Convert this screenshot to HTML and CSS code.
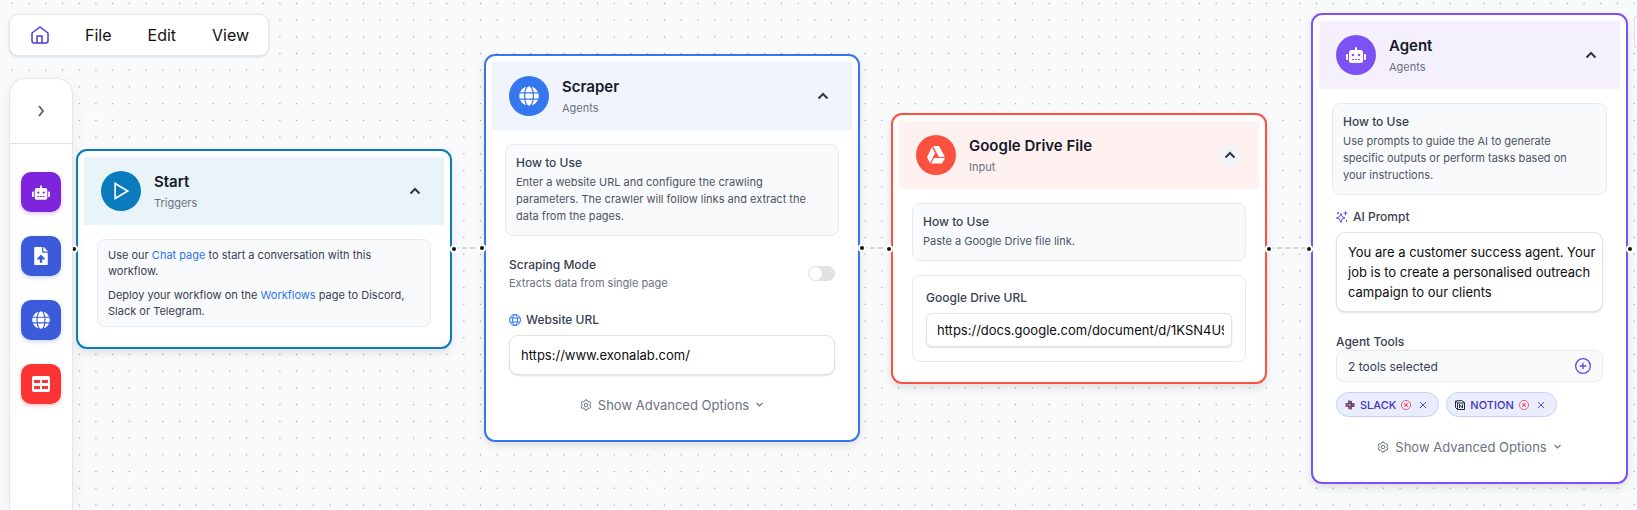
FILE: index.html
```html
<!DOCTYPE html>
<html lang="en">
<head>
  <meta charset="UTF-8" />
  <meta name="viewport" content="width=device-width, initial-scale=1.0"/>
  <title>Workflow Editor</title>
  <link rel="stylesheet" href="styles.css">
</head>
<body>
  <!-- Shared icons -->
  <svg class="icon-defs" aria-hidden="true">
    <symbol id="icon-robot" viewBox="0 0 640 512">
      <path fill="currentColor" fill-rule="evenodd" d="M32 224h32v192H32a32 32 0 0 1-32-32V256a32 32 0 0 1 32-32zm512-48v272a64 64 0 0 1-64 64H160a64 64 0 0 1-64-64V176a80 80 0 0 1 80-80h112V32a32 32 0 0 1 64 0v64h112a80 80 0 0 1 80 80zM264 256a40 40 0 1 0-80 0 40 40 0 0 0 80 0zm-8 128h-64v32h64zm96 0h-64v32h64zm104-128a40 40 0 1 0-80 0 40 40 0 0 0 80 0zm-8 128h-64v32h64zm192-128v128a32 32 0 0 1-32 32h-32V224h32a32 32 0 0 1 32 32z"/>
    </symbol>
    <symbol id="icon-globe" viewBox="0 0 496 512">
      <path fill="currentColor" d="M336.500 160C322 70.700 287.800 8 248 8s-74 62.700-88.500 152h177zM152 256c0 22.200 1.200 43.500 3.300 64h185.300c2.100-20.500 3.300-41.800 3.300-64s-1.200-43.500-3.300-64H155.300c-2.100 20.500-3.300 41.800-3.300 64zm324.700-96c-28.600-67.900-86.500-120.400-158-141.600 24.400 33.800 41.200 84.700 50 141.600h108zM177.200 18.400C105.800 39.600 47.800 92.100 19.300 160h108c8.700-56.900 25.500-107.800 49.900-141.600zM487.400 192H372.700c2.100 21 3.300 42.500 3.300 64s-1.200 43-3.300 64h114.600c5.500-20.500 8.600-41.800 8.600-64s-3.100-43.500-8.500-64zM120 256c0-21.500 1.200-43 3.300-64H8.600C3.200 212.500 0 233.800 0 256s3.200 43.500 8.600 64h114.600c-2-21-3.200-42.500-3.200-64zm39.500 96c14.500 89.300 48.700 152 88.500 152s74-62.700 88.500-152h-177zm159.300 141.600c71.400-21.200 129.400-73.700 158-141.600h-108c-8.800 56.900-25.600 107.800-50 141.600zM19.300 352c28.600 67.900 86.500 120.400 158 141.600-24.400-33.800-41.200-84.700-50-141.600h-108z"/>
    </symbol>
    <symbol id="icon-chevron-up" viewBox="0 0 24 24">
      <path d="m3 17 9-9 9 9" fill="none" stroke="currentColor" stroke-width="4"/>
    </symbol>
    <symbol id="icon-chevron-down" viewBox="0 0 24 24">
      <path d="m4 8 8 8 8-8" fill="none" stroke="currentColor" stroke-width="3"/>
    </symbol>
    <symbol id="icon-gear" viewBox="0 0 24 24">
      <g fill="none" stroke="currentColor" stroke-width="2" stroke-linejoin="round">
        <path d="M9.600 3.900 10 2h4l.4 1.900c.1.500.5.900 1 1.200l.9.500c.5.300 1.100.4 1.600.2l1.900-.6 2 3.500-1.400 1.300c-.4.300-.6.900-.6 1.500v1c0 .6.200 1.100.6 1.500l1.400 1.300-2 3.500-1.900-.6c-.5-.2-1.100-.1-1.600.2l-.9.500c-.5.300-.9.700-1 1.200L14 22h-4l-.4-1.900c-.1-.5-.5-.9-1-1.200l-.9-.5c-.5-.3-1.100-.4-1.600-.2l-1.900.6-2-3.500 1.400-1.300c.4-.4.600-.9.600-1.500v-1c0-.6-.2-1.200-.6-1.500L2.200 8.700l2-3.500 1.900.6c.5.200 1.100.1 1.600-.2l.9-.5c.5-.3.900-.7 1-1.200z"/>
        <circle cx="12" cy="12" r="3.500"/>
      </g>
    </symbol>
    <symbol id="icon-error" viewBox="0 0 24 24">
      <g fill="none" stroke="currentColor" stroke-width="2">
        <circle cx="12" cy="12" r="11"/>
        <path d="m8 8 8 8m0-8-8 8" stroke-width="2.500"/>
      </g>
    </symbol>
    <symbol id="icon-close" viewBox="0 0 24 24">
      <path d="m3 3 18 18m0-18L3 21" fill="none" stroke="currentColor" stroke-width="3"/>
    </symbol>
  </svg>

  <main class="canvas">
    <!-- Dot grid and connections -->
    <svg class="canvas-lines" aria-hidden="true">
      <defs>
        <pattern id="dots" width="20" height="20" patternUnits="userSpaceOnUse" patternTransform="translate(4 -5) scale(.836)">
          <circle cx="10" cy="10" r=".8" fill="#9a9ca3"/>
        </pattern>
      </defs>
      <rect width="100%" height="100%" fill="url(#dots)"/>
      <g class="edges">
        <path d="M454 248H482"/>
        <path d="M862 248H889"/>
        <path d="M1269 248H1309"/>
      </g>
    </svg>

    <section class="node node-start">
      <span class="handle handle-in"></span>
      <span class="handle handle-out"></span>
      <header class="node-header">
        <span class="node-icon">
          <svg width="20" height="20" viewBox="0 0 24 24" fill="none" stroke="currentColor" stroke-width="2"><path d="M5 3 20 12 5 21z"/></svg>
        </span>
        <div class="node-title">
          <h2>Start</h2>
          <p>Triggers</p>
        </div>
        <button class="collapse" aria-label="Collapse Start"><svg width="12" height="12"><use href="#icon-chevron-up"/></svg></button>
      </header>
      <div class="node-body">
        <div class="help help-plain">
          <p>Use our <a href="#chat">Chat page</a> to start a conversation with this workflow.</p>
          <p>Deploy your workflow on the <a href="#workflows">Workflows</a> page to Discord, Slack or Telegram.</p>
        </div>
      </div>
    </section>

    <section class="node node-scraper">
      <span class="handle handle-in"></span>
      <span class="handle handle-out"></span>
      <header class="node-header">
        <span class="node-icon"><svg width="20" height="20"><use href="#icon-globe"/></svg></span>
        <div class="node-title">
          <h2>Scraper</h2>
          <p>Agents</p>
        </div>
        <button class="collapse" aria-label="Collapse Scraper"><svg width="12" height="12"><use href="#icon-chevron-up"/></svg></button>
      </header>
      <div class="node-body">
        <div class="help">
          <h3>How to Use</h3>
          <p>Enter a website URL and configure the crawling parameters. The crawler will follow links and extract the data from the pages.</p>
        </div>
        <div class="field mode">
          <div>
            <label for="mode">Scraping Mode</label>
            <p>Extracts data from single page</p>
          </div>
          <input type="checkbox" class="switch" id="mode">
        </div>
        <div class="field">
          <label for="site"><svg class="blue" width="12" height="12" viewBox="0 0 24 24" fill="none" stroke="currentColor" stroke-width="2"><circle cx="12" cy="12" r="11"/><ellipse cx="12" cy="12" rx="5" ry="11"/><path d="M2 8h20M2 16h20"/></svg>Website URL</label>
          <input type="text" class="text-input" id="site" value="https://www.exonalab.com/">
        </div>
        <button class="advanced"><svg width="12" height="12"><use href="#icon-gear"/></svg>Show Advanced Options<svg width="9" height="9"><use href="#icon-chevron-down"/></svg></button>
      </div>
    </section>

    <section class="node node-drive">
      <span class="handle handle-in"></span>
      <span class="handle handle-out"></span>
      <header class="node-header">
        <span class="node-icon">
          <svg width="20" height="20" viewBox="0 0 20 20" fill="currentColor"><path d="M7 1h6l6 11h-6zM6 2l3 6-5 10-3-6zM8 13h11l-3 5.500H5z"/></svg>
        </span>
        <div class="node-title">
          <h2>Google Drive File</h2>
          <p>Input</p>
        </div>
        <button class="collapse active" aria-label="Collapse Google Drive File"><svg width="12" height="12"><use href="#icon-chevron-up"/></svg></button>
      </header>
      <div class="node-body">
        <div class="help">
          <h3>How to Use</h3>
          <p>Paste a Google Drive file link.</p>
        </div>
        <div class="group">
          <label for="drive">Google Drive URL</label>
          <input type="text" class="text-input small" id="drive" value="https://docs.google.com/document/d/1KSN4U9SdQx2">
        </div>
      </div>
    </section>

    <section class="node node-agent">
      <span class="handle handle-in"></span>
      <span class="handle handle-out"></span>
      <header class="node-header">
        <span class="node-icon"><svg width="20" height="16"><use href="#icon-robot"/></svg></span>
        <div class="node-title">
          <h2>Agent</h2>
          <p>Agents</p>
        </div>
        <button class="collapse" aria-label="Collapse Agent"><svg width="12" height="12"><use href="#icon-chevron-up"/></svg></button>
      </header>
      <div class="node-body">
        <div class="help">
          <h3>How to Use</h3>
          <p>Use prompts to guide the AI to generate specific outputs or perform tasks based on your instructions.</p>
        </div>
        <div class="field">
          <label for="prompt"><svg class="violet" width="12" height="12" viewBox="0 0 24 24" fill="none" stroke="currentColor" stroke-width="2" stroke-linejoin="round"><path d="m10 5 2 6 6 3-6 2-2 7-3-7-6-2 6-3zM19 1v7M15 4h8M21 18v4M4 2v4M2 4h4"/></svg>AI Prompt</label>
          <textarea id="prompt" rows="3">You are a customer success agent. Your job is to create a personalised outreach campaign to our clients</textarea>
        </div>
        <div class="field tools">
          <label for="tools">Agent Tools</label>
          <button class="tool-select" id="tools">2 tools selected
            <svg width="16" height="16" viewBox="0 0 24 24" fill="none" stroke="currentColor" stroke-width="2"><circle cx="12" cy="12" r="11"/><path d="M12 7v10M7 12h10"/></svg>
          </button>
          <div class="chips">
            <span class="chip">
              <svg width="10" height="10" viewBox="0 0 20 20" fill="none" stroke-width="3" stroke-linecap="round"><path stroke="#3c2247" d="M8 2v6M2 8h3M12 3v5M18 12h-6"/><path stroke="#7a1f55" d="M12 8h6M12 18v-6M8 12v5M2 12h6"/></svg>
              SLACK
              <svg class="red" width="10" height="10"><use href="#icon-error"/></svg>
              <button aria-label="Remove Slack"><svg width="8" height="8"><use href="#icon-close"/></svg></button>
            </span>
            <span class="chip">
              <svg width="10" height="10" viewBox="0 0 20 20" fill="none" stroke="#222636" stroke-width="2"><path d="M1 2 13 1l6 4v14H5l-4-4zM1 2l4 4v13M5 6h14"/><path d="M9 16V9l6 7V9"/></svg>
              NOTION
              <svg class="red" width="10" height="10"><use href="#icon-error"/></svg>
              <button aria-label="Remove Notion"><svg width="8" height="8"><use href="#icon-close"/></svg></button>
            </span>
          </div>
        </div>
        <button class="advanced"><svg width="12" height="12"><use href="#icon-gear"/></svg>Show Advanced Options<svg width="9" height="9"><use href="#icon-chevron-down"/></svg></button>
      </div>
    </section>
  </main>

  <div class="overlay">
    <!-- Top menu -->
    <nav class="menu">
      <a href="#home" aria-label="Home"><svg width="18" height="18" viewBox="0 0 18 18" fill="none" stroke="currentColor" stroke-width="1.500" stroke-linejoin="round"><path d="M1 7 9 1l8 6v8a2 2 0 0 1-2 2H3a2 2 0 0 1-2-2zM6 17v-7h5v7"/></svg></a>
      <button>File</button>
      <button>Edit</button>
      <button>View</button>
    </nav>

    <!-- Node palette -->
    <aside class="sidebar">
      <button class="expand" aria-label="Expand sidebar"><svg width="12" height="12" viewBox="0 0 12 12" fill="none" stroke="currentColor" stroke-width="2"><path d="m4 1 4 5-4 5"/></svg></button>
      <div class="palette">
        <button class="purple" aria-label="Agents"><svg width="18" height="15"><use href="#icon-robot"/></svg></button>
        <button aria-label="Files"><svg width="14" height="18" viewBox="0 0 384 512" fill="currentColor"><path d="M224 136V0H24A24 24 0 0 0 0 24v464a24 24 0 0 0 24 24h336a24 24 0 0 0 24-24V160H248a24 24 0 0 1-24-24zm65 216h-65v80a16 16 0 0 1-16 16h-32a16 16 0 0 1-16-16v-80H95c-14 0-21-17-11-27l96-96c7-7 18-7 24 0l96 96c10 10 3 27-11 27zM377 105 279 7a24 24 0 0 0-17-7h-6v128h128v-6a24 24 0 0 0-7-17z"/></svg></button>
        <button aria-label="Web"><svg width="18" height="18"><use href="#icon-globe"/></svg></button>
        <button class="scarlet" aria-label="Tables"><svg width="18" height="16" viewBox="0 0 18 16" fill="currentColor" fill-rule="evenodd"><path d="M2 0h14a2 2 0 0 1 2 2v12a2 2 0 0 1-2 2H2a2 2 0 0 1-2-2V2a2 2 0 0 1 2-2zm0 4v3h6V4zm8 0v3h6V4zm-8 6v3h6v-3zm8 0v3h6v-3z"/></svg></button>
      </div>
    </aside>
  </div>

  <!-- Side drawer, closed -->
  <div class="drawer"></div>
</body>
</html>
```
FILE: styles.css
```css
* {
  box-sizing: border-box;
}

body {
  margin: 0;
  font-family: Inter, sans-serif;
  font-size: 12px;
  color: #374151;
  background-color: #f9fafc;
  overflow: hidden;
}

h2, h3, p {
  margin: 0;
}

button, input, textarea {
  font-family: inherit;
}

button {
  display: flex;
  align-items: center;
  justify-content: center;
  padding: 0;
  border: none;
  background: none;
  cursor: pointer;
}

svg {
  flex: none;
}

.icon-defs {
  position: absolute;
  width: 0;
  height: 0;
}

/* Canvas */
.canvas {
  position: relative;
  height: 100vh;
  overflow: hidden;
}

.canvas-lines {
  display: block;
  width: 100%;
  height: 100%;
}

.edges {
  fill: none;
  stroke: #b1b1b7;
  stroke-width: 1;
  stroke-dasharray: 5 3;
}

/* Nodes */
.node {
  position: absolute;
  width: 376px;
  padding: 6px;
  background-color: white;
  border: 2px solid var(--accent);
  border-radius: 11px;
  box-shadow: 0 4px 8px rgba(0, 0, 0, 0.1);
}

.node-start {
  --accent: #0a7cbd;
  --tint: #e9f4f9;
  left: 76px;
  top: 149px;
}

.node-scraper {
  --accent: #3578ee;
  --tint: #eff4fe;
  left: 484px;
  top: 54px;
}

.node-drive {
  --accent: #fb5140;
  --tint: #fff1f0;
  left: 891px;
  top: 113px;
}

.node-agent {
  --accent: #7c52f4;
  --tint: #f5f0fe;
  left: 1311px;
  top: 13px;
  width: 317px;
}

.node-header {
  display: flex;
  align-items: center;
  gap: 13px;
  height: 68px;
  padding: 0 17px;
  background-color: var(--tint);
}

.node-icon {
  display: flex;
  align-items: center;
  justify-content: center;
  width: 40px;
  height: 40px;
  color: white;
  background-color: var(--accent);
  border-radius: 50%;
}

.node-title {
  flex: 1;
  padding-top: 2px;
}

.node-title h2 {
  font-size: 15px;
  font-weight: 600;
  line-height: 22px;
  color: #151b28;
}

.node-title p {
  font-size: 11px;
  line-height: 20px;
  color: #6b7280;
}

.collapse {
  width: 24px;
  height: 24px;
  color: #33373e;
  border-radius: 50%;
}

.collapse.active {
  background-color: #f1f3f5;
}

.handle {
  position: absolute;
  top: 50%;
  width: 8px;
  height: 8px;
  margin-top: -4px;
  background-color: #111;
  border: 2px solid white;
  border-radius: 50%;
}

.handle-in {
  left: -8px;
}

.handle-out {
  right: -8px;
}

.node-body {
  display: flex;
  flex-direction: column;
  gap: 14px;
  padding: 14px 13px;
}

.help {
  padding: 10px;
  background-color: #f9fafb;
  border: 1px solid #e8eaee;
  border-radius: 8px;
  font-size: 11px;
  line-height: 17px;
  color: #4b5563;
}

.help h3 {
  margin-bottom: 3px;
  font-size: 12px;
  font-weight: 500;
  line-height: 16px;
  color: #374151;
}

.help-plain {
  padding: 7px 10px;
  line-height: 16px;
  color: #374151;
}

.help-plain p + p {
  margin-top: 8px;
}

.node-agent .help {
  padding-right: 24px;
}

.help a {
  color: #2f74f0;
  text-decoration: none;
}

.field {
  display: flex;
  flex-direction: column;
  gap: 7px;
  padding: 0 4px;
}

label {
  display: flex;
  align-items: center;
  gap: 5px;
  font-size: 12px;
  font-weight: 500;
  line-height: 16px;
}

.blue {
  color: #3578ee;
}

.violet {
  color: #5b48e8;
}

.red {
  color: #f2445c;
}

.text-input,
textarea {
  width: 100%;
  padding: 0 11px;
  font-size: 13px;
  color: #0c0d10;
  background-color: white;
  border: 1px solid #e0e2e6;
  border-radius: 9px;
  box-shadow: 0 1px 2px rgba(0, 0, 0, 0.12);
}

.text-input {
  height: 40px;
}

.text-input.small {
  height: 34px;
  padding: 0 7px 0 10px;
  border-radius: 6px;
}

textarea {
  display: block;
  padding: 9px 4px 9px 11px;
  line-height: 20px;
  resize: none;
  overflow: hidden;
}

.mode {
  flex-direction: row;
  align-items: center;
  justify-content: space-between;
  padding-top: 7px;
  padding-bottom: 5px;
}

.mode p {
  font-size: 11px;
  line-height: 20px;
  color: #6b7280;
}

.switch {
  appearance: none;
  display: flex;
  width: 27px;
  height: 15px;
  margin: 0 0 4px;
  padding: 1px;
  background-color: #e2e2e4;
  border-radius: 8px;
}

.switch::before {
  content: "";
  width: 13px;
  height: 13px;
  background-color: white;
  border-radius: 50%;
}

.group {
  display: flex;
  flex-direction: column;
  gap: 7px;
  padding: 14px 13px;
  border: 1px solid #e8eaee;
  border-radius: 8px;
}

.advanced {
  gap: 6px;
  height: 31px;
  font-size: 13px;
  color: #6b7280;
}

/* Agent tools */
.tools {
  gap: 0;
  padding-top: 8px;
}

.tool-select {
  justify-content: space-between;
  height: 32px;
  padding: 0 11px;
  font-size: 12px;
  color: #374151;
  background-color: #f9fafb;
  border: 1px solid #e8eaee;
  border-radius: 8px;
}

.tool-select svg {
  color: #5b48e8;
}

.chips {
  display: flex;
  gap: 7px;
  margin-top: 10px;
}

.chip {
  display: flex;
  align-items: center;
  gap: 5px;
  height: 25px;
  padding: 0 8px;
  font-size: 11px;
  font-weight: 500;
  color: #4033c0;
  background-color: #e9edfe;
  border: 1px solid #cbcdf8;
  border-radius: 13px;
}

.chip button {
  width: 14px;
  height: 14px;
  color: #5b48e8;
}

/* Menu and palette over the canvas */
.overlay {
  position: absolute;
  top: 0;
  left: 0;
  display: flex;
  flex-direction: column;
  align-items: flex-start;
  gap: 22px;
  height: 100vh;
  padding: 14px 0 0 9px;
}

.menu {
  display: flex;
  align-items: center;
  gap: 36px;
  height: 42px;
  padding: 0 19px 0 21px;
  background-color: white;
  border: 1px solid #e4e6ea;
  border-radius: 9px;
  box-shadow: 0 1px 3px rgba(0, 0, 0, 0.12);
}

.menu a {
  display: flex;
  color: #4f3bd0;
}

.menu button {
  font-size: 16px;
  color: #111;
}

.sidebar {
  flex: 1;
  width: 64px;
  background-color: white;
  border: 1px solid #e4e6ea;
  border-bottom: none;
  border-radius: 16px 16px 0 0;
  box-shadow: 0 4px 16px rgba(0, 0, 0, 0.06);
}

.expand {
  width: 100%;
  height: 65px;
  color: #66696f;
  border-bottom: 1px solid #e0e2e6;
}

.palette {
  display: flex;
  flex-direction: column;
  align-items: center;
  gap: 24px;
  padding-top: 28px;
}

.palette button {
  width: 40px;
  height: 40px;
  color: white;
  background-color: #3b5bdb;
  border-radius: 10px;
  box-shadow: 0 2px 4px rgba(59, 91, 219, 0.25);
}

.palette .purple {
  background-color: #7d24dc;
  box-shadow: 0 2px 4px rgba(125, 36, 220, 0.25);
}

.palette .scarlet {
  background-color: #fe3434;
  box-shadow: 0 2px 4px rgba(254, 52, 52, 0.25);
}

.drawer {
  position: absolute;
  top: 16px;
  right: 0;
  width: 3px;
  height: 32px;
  background-color: white;
  border: 1px solid #dddfe3;
  border-right: none;
  border-radius: 3px 0 0 3px;
}
```
